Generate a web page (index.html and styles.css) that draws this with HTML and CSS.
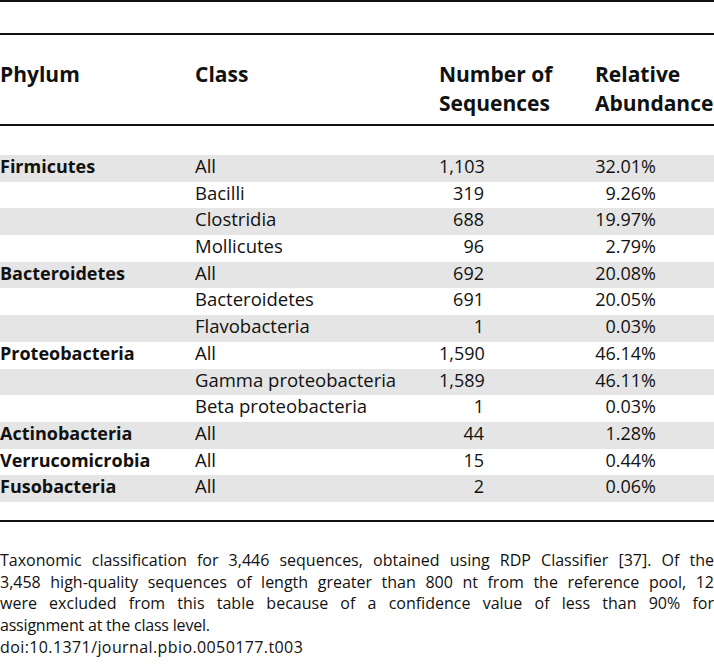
FILE: index.html
```html
<!DOCTYPE html>
<html lang="en">
<head>
<meta charset="utf-8">
<title>Table 3</title>
<link rel="stylesheet" href="styles.css">
</head>
<body>
<div class="figure">
  <div class="rule top"></div>
  <div class="spacer-top"></div>
  <div class="rule"></div>
  <div class="grid head">
    <div class="hcell">Phylum</div>
    <div class="hcell">Class</div>
    <div class="hcell">Number of<br>Sequences</div>
    <div class="hcell">Relative<br>Abundance</div>
  </div>
  <div class="rule"></div>
  <div class="spacer-body"></div>
  <div class="body">
    <div class="grid row odd"><div class="phy">Firmicutes</div><div class="cls">All</div><div class="num">1,103</div><div class="pct">32.01%</div></div>
    <div class="grid row"><div class="phy"></div><div class="cls">Bacilli</div><div class="num">319</div><div class="pct">9.26%</div></div>
    <div class="grid row odd"><div class="phy"></div><div class="cls">Clostridia</div><div class="num">688</div><div class="pct">19.97%</div></div>
    <div class="grid row"><div class="phy"></div><div class="cls">Mollicutes</div><div class="num">96</div><div class="pct">2.79%</div></div>
    <div class="grid row odd"><div class="phy">Bacteroidetes</div><div class="cls">All</div><div class="num">692</div><div class="pct">20.08%</div></div>
    <div class="grid row"><div class="phy"></div><div class="cls">Bacteroidetes</div><div class="num">691</div><div class="pct">20.05%</div></div>
    <div class="grid row odd"><div class="phy"></div><div class="cls">Flavobacteria</div><div class="num">1</div><div class="pct">0.03%</div></div>
    <div class="grid row"><div class="phy">Proteobacteria</div><div class="cls">All</div><div class="num">1,590</div><div class="pct">46.14%</div></div>
    <div class="grid row odd"><div class="phy"></div><div class="cls">Gamma proteobacteria</div><div class="num">1,589</div><div class="pct">46.11%</div></div>
    <div class="grid row"><div class="phy"></div><div class="cls">Beta proteobacteria</div><div class="num">1</div><div class="pct">0.03%</div></div>
    <div class="grid row odd"><div class="phy">Actinobacteria</div><div class="cls">All</div><div class="num">44</div><div class="pct">1.28%</div></div>
    <div class="grid row"><div class="phy">Verrucomicrobia</div><div class="cls">All</div><div class="num">15</div><div class="pct">0.44%</div></div>
    <div class="grid row odd"><div class="phy">Fusobacteria</div><div class="cls">All</div><div class="num">2</div><div class="pct">0.06%</div></div>
  </div>
  <div class="spacer-end"></div>
  <div class="rule"></div>
  <div class="caption">
    <span class="line just">Taxonomic classification for 3,446 sequences, obtained using RDP Classifier [37]. Of the</span>
    <span class="line just">3,458 high-quality sequences of length greater than 800 nt from the reference pool, 12</span>
    <span class="line just">were excluded from this table because of a confidence value of less than 90% for</span>
    <span class="line tight">assignment at the class level.</span>
    <span class="line doi">doi:10.1371/journal.pbio.0050177.t003</span>
  </div>
</div>
</body>
</html>
```

FILE: styles.css
```css
html, body {
  margin: 0;
  padding: 0;
  background: #ffffff;
  overflow: hidden;
}

body {
  font-family: "Open Sans", "Noto Sans", "DejaVu Sans", sans-serif;
  color: #111111;
}

.figure {
  width: 714px;
}

.rule {
  height: 2px;
  background: #111111;
}

.spacer-top {
  height: 31px;
}

.grid {
  display: grid;
  grid-template-columns: 195px 244px 156px 1fr;
}

.head {
  height: 89px;
  box-sizing: border-box;
  padding-top: 25px;
  font-weight: 700;
  font-size: 21px;
  line-height: 29px;
}

.hcell {
  white-space: nowrap;
}

.spacer-body {
  height: 29px;
}

.body {
  font-size: 18px;
}

.row {
  height: 26.7px;
  line-height: 22.7px;
  align-items: start;
}

.row.odd {
  background: #e5e5e5;
}

.phy {
  font-weight: 700;
}

.cls {
  font-size: 18.5px;
  white-space: nowrap;
}

.num {
  text-align: right;
  padding-right: 111px;
}

.pct {
  text-align: right;
  padding-right: 58px;
}

.spacer-end {
  height: 18px;
}

.caption {
  padding-top: 28px;
  font-size: 16px;
  line-height: 21.7px;
}

.line {
  display: block;
  white-space: nowrap;
}

.line.just {
  text-align: justify;
  text-align-last: justify;
}

.line.tight {
  letter-spacing: -0.2px;
}

.line.doi {
  letter-spacing: 0.4px;
}
```
